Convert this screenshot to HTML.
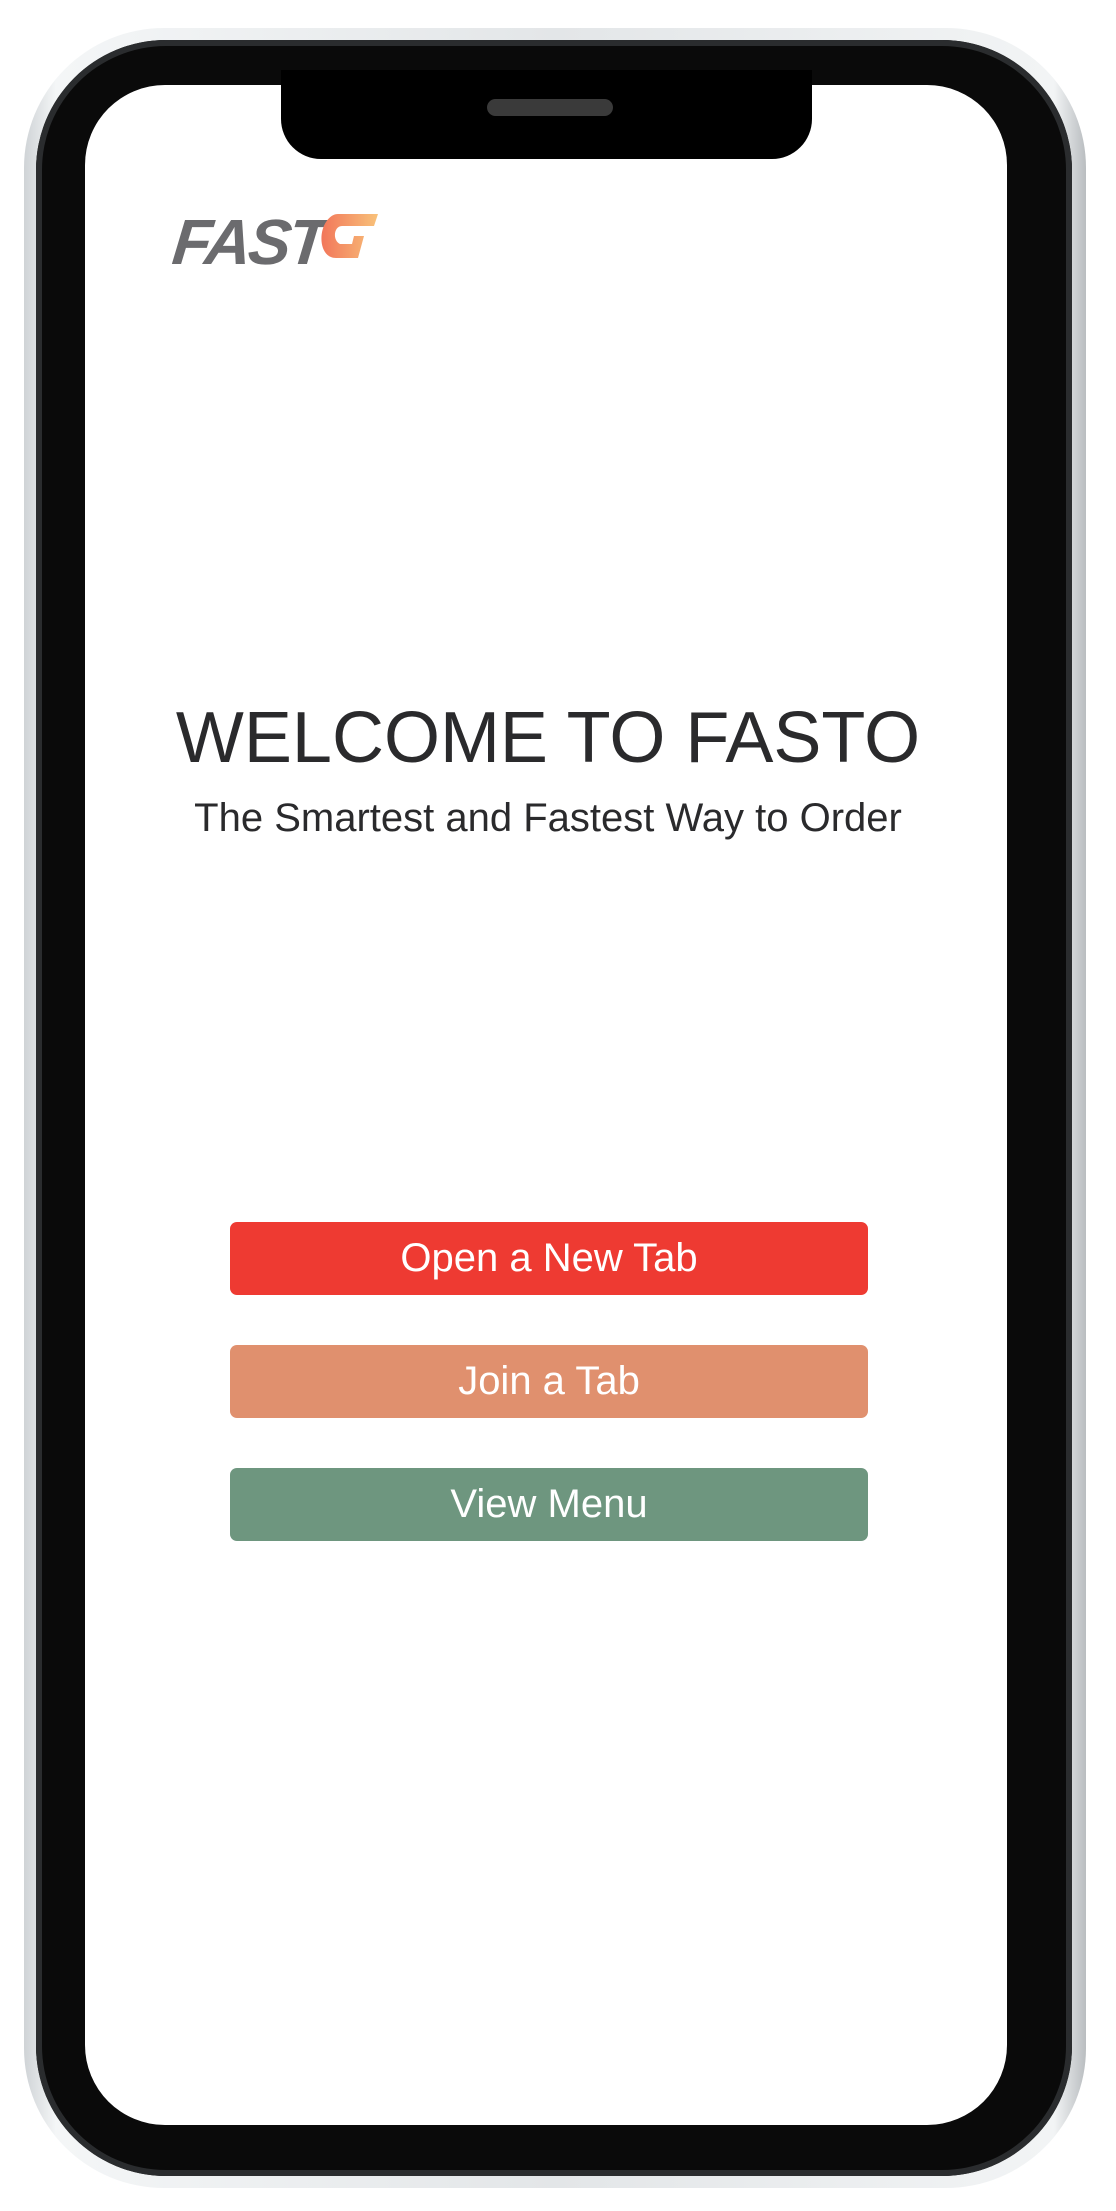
<!DOCTYPE html>
<html><head><meta charset="utf-8"><style>
html,body{margin:0;padding:0;background:#fff;}
body{width:1116px;height:2211px;position:relative;overflow:hidden;font-family:"Liberation Sans",sans-serif;}
.frame{position:absolute;left:24px;top:28px;width:1062px;height:2160px;border-radius:140px;background:linear-gradient(90deg,#cfd3d6,#f4f6f7 3%,#e3e6e8 50%,#f2f4f5 97%,#b9bdc0);}
.bezel{position:absolute;left:36px;top:40px;width:1036px;height:2136px;border-radius:130px;background:#0a0a0a;box-shadow:inset 0 0 0 6px #2a2c2e;}
.screen{position:absolute;left:85px;top:85px;width:922px;height:2040px;border-radius:80px;background:#fff;overflow:hidden;}
.notch{position:absolute;left:281px;top:70px;width:531px;height:89px;background:#000;border-radius:0 0 40px 40px;}
.speaker{position:absolute;left:487px;top:99px;width:126px;height:17px;border-radius:9px;background:#3a3a3a;}
.logo{position:absolute;left:173px;top:205px;font-size:64px;font-weight:bold;font-style:italic;color:#6b6b6e;letter-spacing:-3px;transform:skewX(-6deg);}
.g{position:absolute;left:318px;top:214px;width:60px;height:46px;}
h1{position:absolute;left:0;width:1096px;top:693px;margin:0;text-align:center;font-weight:normal;font-size:72px;color:#2a2a2c;line-height:90px;}
.sub{position:absolute;left:0;width:1096px;top:796px;text-align:center;font-size:40px;color:#2a2a2c;}
.btn{position:absolute;left:230px;width:638px;height:73px;border-radius:7px;color:#fff;font-size:40px;text-align:center;line-height:73px;}
</style></head><body>
<div class="frame"></div>
<div class="bezel"></div>
<div class="screen"></div>
<div class="notch"></div>
<div class="speaker"></div>
<div class="logo">FAST</div>
<svg class="g" viewBox="0 0 60 46"><defs><linearGradient id="lg" x1="0" x2="1"><stop offset="0" stop-color="#f2765a"/><stop offset="1" stop-color="#f8c27a"/></linearGradient></defs><path d="M20 0 H60 L56 12 H24 C16 12 14 26 22 30 H34 L36 22 H46 L40 44 H18 C2 44 0 20 8 8 C12 2 16 0 20 0Z" fill="url(#lg)"/></svg>
<h1>WELCOME TO FASTO</h1>
<div class="sub">The Smartest and Fastest Way to Order</div>
<div class="btn" style="top:1222px;background:#ee3a32;">Open a New Tab</div>
<div class="btn" style="top:1345px;background:#e0906e;">Join a Tab</div>
<div class="btn" style="top:1468px;background:#6e967f;">View Menu</div>
</body></html>
